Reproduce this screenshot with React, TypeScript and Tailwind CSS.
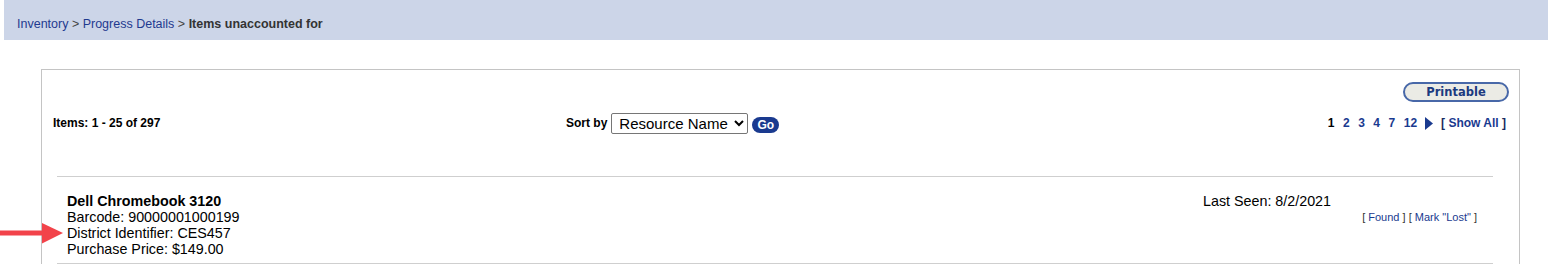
const font = { fontFamily: '"Liberation Sans", Arial, sans-serif' };

const RedArrow = () => (
  <svg
    className="absolute left-0 top-[223px]"
    width="64"
    height="21"
    viewBox="0 0 64 21"
  >
    <rect x="0" y="7.5" width="44" height="5" fill="#f2434a" />
    <polygon points="42,0 63,10 42,20.5" fill="#f2434a" />
  </svg>
);

const Breadcrumb = () => (
  <div className="ml-[4px] h-[40px] bg-[#ccd5e8] pl-[13px] pt-[17px] text-[12.5px] leading-[14px] text-[#333]">
    <a className="text-[#1f3a8f]" href="#">
      Inventory
    </a>
    <span className="text-[#444]"> &gt; </span>
    <a className="text-[#1f3a8f]" href="#">
      Progress Details
    </a>
    <span className="text-[#444]"> &gt; </span>
    <span className="font-bold">Items unaccounted for</span>
  </div>
);

const Pager = () => (
  <div className="flex items-center text-[12px] font-bold leading-[14px]">
    <div className="flex gap-[8.5px]">
      <span className="text-black">1</span>
      {["2", "3", "4", "7", "12"].map((p) => (
        <a key={p} href="#" className="text-[#1a3a8f]">
          {p}
        </a>
      ))}
    </div>
    <svg width="9" height="13" viewBox="0 0 9 13" className="ml-[8px]">
      <polygon points="0,0 8,6.5 0,13" fill="#1a3a8f" />
    </svg>
    <span className="ml-[7px] text-[#1a3a8f]">
      <span className="text-[#1a2a5f]">[</span> Show All{" "}
      <span className="text-[#1a2a5f]">]</span>
    </span>
  </div>
);

const ItemRow = () => (
  <div className="flex border-b border-[#cfcfcf] pb-[6px] pl-[10px] pt-[16px] text-[14.3px] leading-[16px] text-black">
    <div className="flex-1">
      <div className="font-bold">Dell Chromebook 3120</div>
      <div>Barcode: 90000001000199</div>
      <div>District Identifier: CES457</div>
      <div>Purchase Price: $149.00</div>
    </div>
    <div className="mr-[16px] w-[274px]">
      <div>Last Seen: 8/2/2021</div>
      <div className="mt-[1px] text-right text-[11px] leading-[14px] text-[#1a3a8f]">
        <span className="text-[#333]">[ </span>
        <a href="#">Found</a>
        <span className="text-[#333]"> ] [ </span>
        <a href="#">Mark "Lost"</a>
        <span className="text-[#333]"> ]</span>
      </div>
    </div>
  </div>
);

export default function App() {
  return (
    <div className="relative h-[264px] overflow-hidden bg-white" style={font}>
      <Breadcrumb />

      <div className="ml-[41px] mr-[28px] mt-[29px] border border-b-0 border-[#c4c4c4] pb-[40px]">
        <div className="flex justify-end pr-[10px] pt-[12px]">
          <button
            className="h-[20px] w-[106px] rounded-full border-2 border-[#4868a8] bg-[#ebebe5] text-[12px] font-bold leading-[16px] text-[#1c3a80]"
            style={{ fontFamily: '"DejaVu Sans", Verdana, sans-serif', fontSize: 11.5 }}
          >
            Printable
          </button>
        </div>

        <div className="mt-[10px] flex h-[22px] items-center pl-[11px] pr-[13px]">
          <div className="w-[513px] text-[12px] font-bold text-black">
            Items: 1 - 25 of 297
          </div>
          <div className="flex items-center text-[12px] font-bold text-black">
            <span>Sort by</span>
            <select className="ml-[4px] h-[21px] w-[137px] rounded-[2px] border border-[#767676] bg-white pl-[3px] text-[15px] font-normal leading-[19px] text-black">
              <option>Resource Name</option>
            </select>
            <button className="ml-[4px] mt-[4px] h-[16px] w-[27px] rounded-full bg-[#1a3a8f] text-[12px] font-bold leading-[16px] text-white">
              Go
            </button>
          </div>
          <div className="flex flex-1 justify-end">
            <Pager />
          </div>
        </div>

        <div className="ml-[15px] mr-[26px] mt-[42px] border-t border-[#cfcfcf]">
          <ItemRow />
        </div>
      </div>

      <RedArrow />
    </div>
  );
}
